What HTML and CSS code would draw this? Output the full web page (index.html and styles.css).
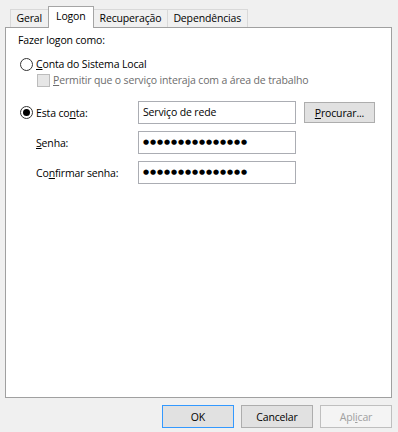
FILE: index.html
```html
<!DOCTYPE html>
<html lang="pt">
<head>
<meta charset="utf-8">
<link rel="stylesheet" href="styles.css">
</head>
<body>
<div class="dialog">
  <div class="tabs">
    <div class="tab">Geral</div>
    <div class="tab active">Logon</div>
    <div class="tab">Recuperação</div>
    <div class="tab">Dependências</div>
  </div>
  <div class="panel">
    <div class="heading">Fazer logon como:</div>
    <div class="row radio-row">
      <span class="radio"></span>
      <span><u>C</u>onta do Sistema Local</span>
    </div>
    <div class="row check-row">
      <span class="check"></span>
      <span class="disabled"><u>P</u>ermitir que o serviço interaja com a área de trabalho</span>
    </div>
    <div class="form">
      <div class="flabel first"><span class="radio checked"></span><span>Esta co<u>n</u>ta:</span></div>
      <div class="field">Serviço de rede</div>
      <button class="btn browse"><u>P</u>rocurar...</button>
      <div class="flabel indent"><span><u>S</u>enha:</span></div>
      <div class="field dots">●●●●●●●●●●●●●●●</div>
      <div></div>
      <div class="flabel indent"><span>Co<u>n</u>firmar senha:</span></div>
      <div class="field dots">●●●●●●●●●●●●●●●</div>
      <div></div>
    </div>
  </div>
  <div class="footer">
    <button class="btn default">OK</button>
    <button class="btn">Cancelar</button>
    <button class="btn off">Apl<u>i</u>car</button>
  </div>
</div>
</body>
</html>
```
FILE: styles.css
```css
* { box-sizing: border-box; }
html, body { margin: 0; padding: 0; }
body {
  background: #f0f0f0;
  font-family: "Open Sans", "Noto Sans", sans-serif;
  font-size: 10.5px;
  letter-spacing: -0.15px;
  color: #000;
  width: 398px;
  height: 432px;
  overflow: hidden;
}
u { text-decoration: underline; text-underline-offset: 1px; }
.dialog { padding: 6px 6px 0 5px; }
.tabs {
  display: flex;
  align-items: flex-end;
  height: 21px;
  padding-left: 5px;
  position: relative;
  z-index: 2;
}
.tab {
  height: 18px;
  line-height: 16px;
  padding: 0 5.5px;
  border: 1px solid #d9d9d9;
  border-bottom: none;
  background: #f0f0f0;
  margin-right: -1px;
}
.tab.active {
  line-height: 19px;
  background: #fff;
  border-color: #a5a5a5;
  padding: 0 7.5px;
  margin-bottom: -1px;
  height: 22px;
  position: relative;
  z-index: 3;
}
.panel {
  position: relative;
  z-index: 1;
  width: 387px;
  height: 371px;
  background: #fff;
  border: 1px solid #a0a0a0;
  padding: 4px 0 0 12px;
}
.heading { height: 16px; line-height: 16px; }
.row { display: flex; align-items: center; gap: 3px; }
.radio-row { margin-top: 8px; margin-left: 2px; height: 16px; }
.check-row { margin-top: 0; margin-left: 19px; height: 16px; }
.radio {
  display: inline-block;
  width: 13px; height: 13px;
  border: 1px solid #333;
  border-radius: 50%;
  background: #fff;
  position: relative;
  flex: none;
}
.radio.checked::after {
  content: "";
  position: absolute;
  left: 2px; top: 2px;
  width: 7px; height: 7px;
  border-radius: 50%;
  background: #000;
}
.check {
  width: 13px; height: 13px;
  border: 1px solid #bcbcbc;
  background: #e6e6e6;
  flex: none;
}
.disabled { color: #6d6d6d; }
.form {
  margin-top: 13px;
  display: grid;
  grid-template-columns: 112px 158px 71px;
  grid-template-rows: 23px 23px 23px;
  row-gap: 7px;
  column-gap: 8px;
  align-items: center;
}
.flabel { display: flex; align-items: center; gap: 3px; }
.flabel.first { margin-left: 2px; }
.flabel.indent { padding-left: 18px; }
.field {
  height: 23px;
  border: 1px solid #abadb3;
  background: #fff;
  line-height: 21px;
  padding-left: 4px;
  white-space: nowrap;
}
.dots {
  font-family: "DejaVu Sans", sans-serif;
  font-size: 7px;
  letter-spacing: 0.9px;
  line-height: 21px;
}
.btn {
  font-family: inherit;
  font-size: 10.5px;
  letter-spacing: -0.15px;
  color: #000;
  height: 21px;
  width: 71px;
  border: 1px solid #adadad;
  background: #e1e1e1;
  padding: 0;
  margin: 0;
}
.footer {
  display: flex;
  justify-content: flex-end;
  gap: 7px;
  padding-top: 7px;
}
.footer .btn { width: 72px; height: 23px; }
.btn.default { border-color: #3399ff; }
.btn.off { color: #a0a0a0; border-color: #bfbfbf; background: #f4f4f4; }
```
